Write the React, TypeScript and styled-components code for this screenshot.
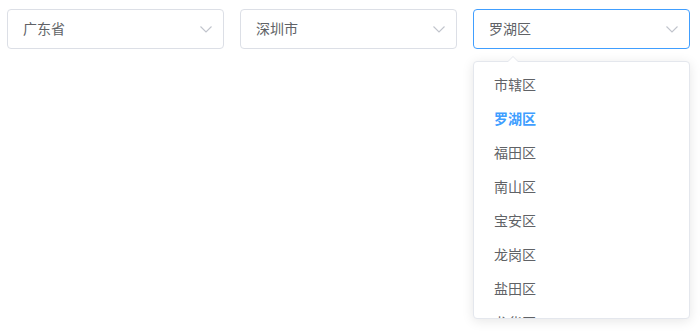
import React, { ReactElement } from "react";
import styled, { createGlobalStyle } from "styled-components";

const GlobalStyle = createGlobalStyle`
  body {
    margin: 0;
    background: #fff;
    font-family: "Noto Sans CJK SC", "Noto Sans", sans-serif;
  }
`;

const Page = styled.div`
  box-sizing: border-box;
  height: 333px;
  overflow: hidden;
  display: flex;
  align-items: flex-start;
  gap: 16px;
  padding: 9px 7px 0;
`;

const SelectBox = styled.div`
  display: flex;
  flex-direction: column;
  width: 217px;
`;

const Input = styled.div<{ $focused: boolean }>`
  box-sizing: border-box;
  height: 40px;
  display: flex;
  align-items: center;
  justify-content: space-between;
  padding: 0 10px 2px 15px;
  border: 1px solid ${props => (props.$focused ? "#409eff" : "#dcdfe6")};
  border-radius: 4px;
  font-size: 14px;
  color: #606266;
  background: #fff;
`;

const Arrow = styled.svg`
  width: 14px;
  height: 14px;
  margin-top: 2px;
  color: #c0c4cc;
`;

const Dropdown = styled.div`
  position: relative;
  margin-top: 12px;
  height: 258px;
  box-sizing: border-box;
  border: 1px solid #e4e7ed;
  border-radius: 4px;
  background: #fff;
  box-shadow: 0 2px 12px 0 rgba(0, 0, 0, 0.1);

  &::before,
  &::after {
    content: "";
    position: absolute;
    left: 33px;
    width: 0;
    height: 0;
    border: 6px solid transparent;
    border-top-width: 0;
  }

  &::before {
    top: -6px;
    border-bottom-color: #e4e7ed;
  }

  &::after {
    top: -5px;
    border-bottom-color: #fff;
  }
`;

const OptionList = styled.ul`
  list-style: none;
  margin: 0;
  padding: 5px 0 7px;
  height: 100%;
  box-sizing: border-box;
  overflow: hidden;
  border-radius: 4px;
`;

const Option = styled.li<{ $selected: boolean }>`
  height: 34px;
  line-height: 34px;
  padding: 0 20px;
  font-size: 14px;
  color: ${props => (props.$selected ? "#409eff" : "#606266")};
  font-weight: ${props => (props.$selected ? 700 : 400)};
`;

function ChevronDown(): ReactElement {
  return (
    <Arrow viewBox="0 0 14 14" fill="none">
      <path d="M1.5 4.5 L7 10 L12.5 4.5" stroke="currentColor" strokeWidth="1.1" />
    </Arrow>
  );
}

type SelectProps = {
  value: string;
  focused?: boolean;
  options?: string[];
};

function Select({ value, focused = false, options }: SelectProps): ReactElement {
  return (
    <SelectBox>
      <Input $focused={focused}>
        <span>{value}</span>
        <ChevronDown />
      </Input>
      {options && (
        <Dropdown>
          <OptionList>
            {options.map(option => (
              <Option key={option} $selected={option === value}>
                {option}
              </Option>
            ))}
          </OptionList>
        </Dropdown>
      )}
    </SelectBox>
  );
}

const districts = ["市辖区", "罗湖区", "福田区", "南山区", "宝安区", "龙岗区", "盐田区", "龙华区"];

export default function App(): ReactElement {
  return (
    <>
      <GlobalStyle />
      <Page>
        <Select value="广东省" />
        <Select value="深圳市" />
        <Select value="罗湖区" focused options={districts} />
      </Page>
    </>
  );
}
